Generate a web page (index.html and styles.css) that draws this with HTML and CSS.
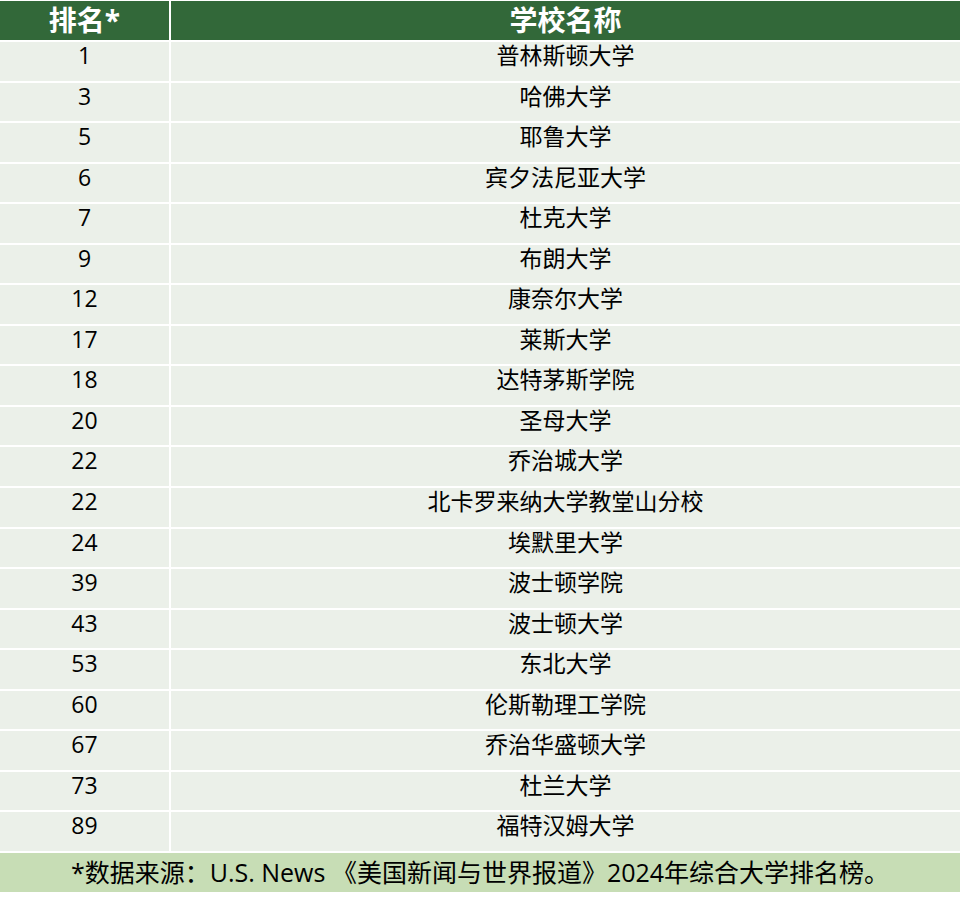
FILE: index.html
```html
<!DOCTYPE html>
<html lang="zh-CN">
<head>
<meta charset="utf-8">
<title>排名</title>
<link rel="stylesheet" href="styles.css">
</head>
<body>
<div class="table">
  <div class="head">排名*</div><div class="head">学校名称</div>
  <div class="cell">1</div><div class="cell">普林斯顿大学</div>
  <div class="cell">3</div><div class="cell">哈佛大学</div>
  <div class="cell">5</div><div class="cell">耶鲁大学</div>
  <div class="cell">6</div><div class="cell">宾夕法尼亚大学</div>
  <div class="cell">7</div><div class="cell">杜克大学</div>
  <div class="cell">9</div><div class="cell">布朗大学</div>
  <div class="cell">12</div><div class="cell">康奈尔大学</div>
  <div class="cell">17</div><div class="cell">莱斯大学</div>
  <div class="cell">18</div><div class="cell">达特茅斯学院</div>
  <div class="cell">20</div><div class="cell">圣母大学</div>
  <div class="cell">22</div><div class="cell">乔治城大学</div>
  <div class="cell">22</div><div class="cell">北卡罗来纳大学教堂山分校</div>
  <div class="cell">24</div><div class="cell">埃默里大学</div>
  <div class="cell">39</div><div class="cell">波士顿学院</div>
  <div class="cell">43</div><div class="cell">波士顿大学</div>
  <div class="cell">53</div><div class="cell">东北大学</div>
  <div class="cell">60</div><div class="cell">伦斯勒理工学院</div>
  <div class="cell">67</div><div class="cell">乔治华盛顿大学</div>
  <div class="cell">73</div><div class="cell">杜兰大学</div>
  <div class="cell">89</div><div class="cell">福特汉姆大学</div>
  <div class="foot">*数据来源：U.S. News 《美国新闻与世界报道》2024年综合大学排名榜。</div>
</div>
</body>
</html>
```
FILE: styles.css
```css
html, body {
  margin: 0;
  padding: 0;
  background: #ffffff;
}
body {
  padding-top: 1px;
  font-family: "Open Sans", "Noto Sans CJK SC", sans-serif;
  color: #000000;
}
.table {
  width: 960px;
  display: grid;
  grid-template-columns: 169px 789px;
  grid-template-rows: 39px repeat(20, 38.55px) 39px;
  column-gap: 2px;
  row-gap: 2px;
}
.head {
  background: #326839;
  color: #ffffff;
  font-weight: 700;
  font-size: 28px;
  line-height: 39px;
  text-align: center;
  white-space: nowrap;
}
.cell {
  background: #ebf0e9;
  font-size: 23px;
  line-height: 27px;
  text-align: center;
  white-space: nowrap;
}
.foot {
  grid-column: 1 / span 2;
  background: #c7ddb5;
  font-size: 25px;
  line-height: 39px;
  text-align: center;
  white-space: nowrap;
}
```
